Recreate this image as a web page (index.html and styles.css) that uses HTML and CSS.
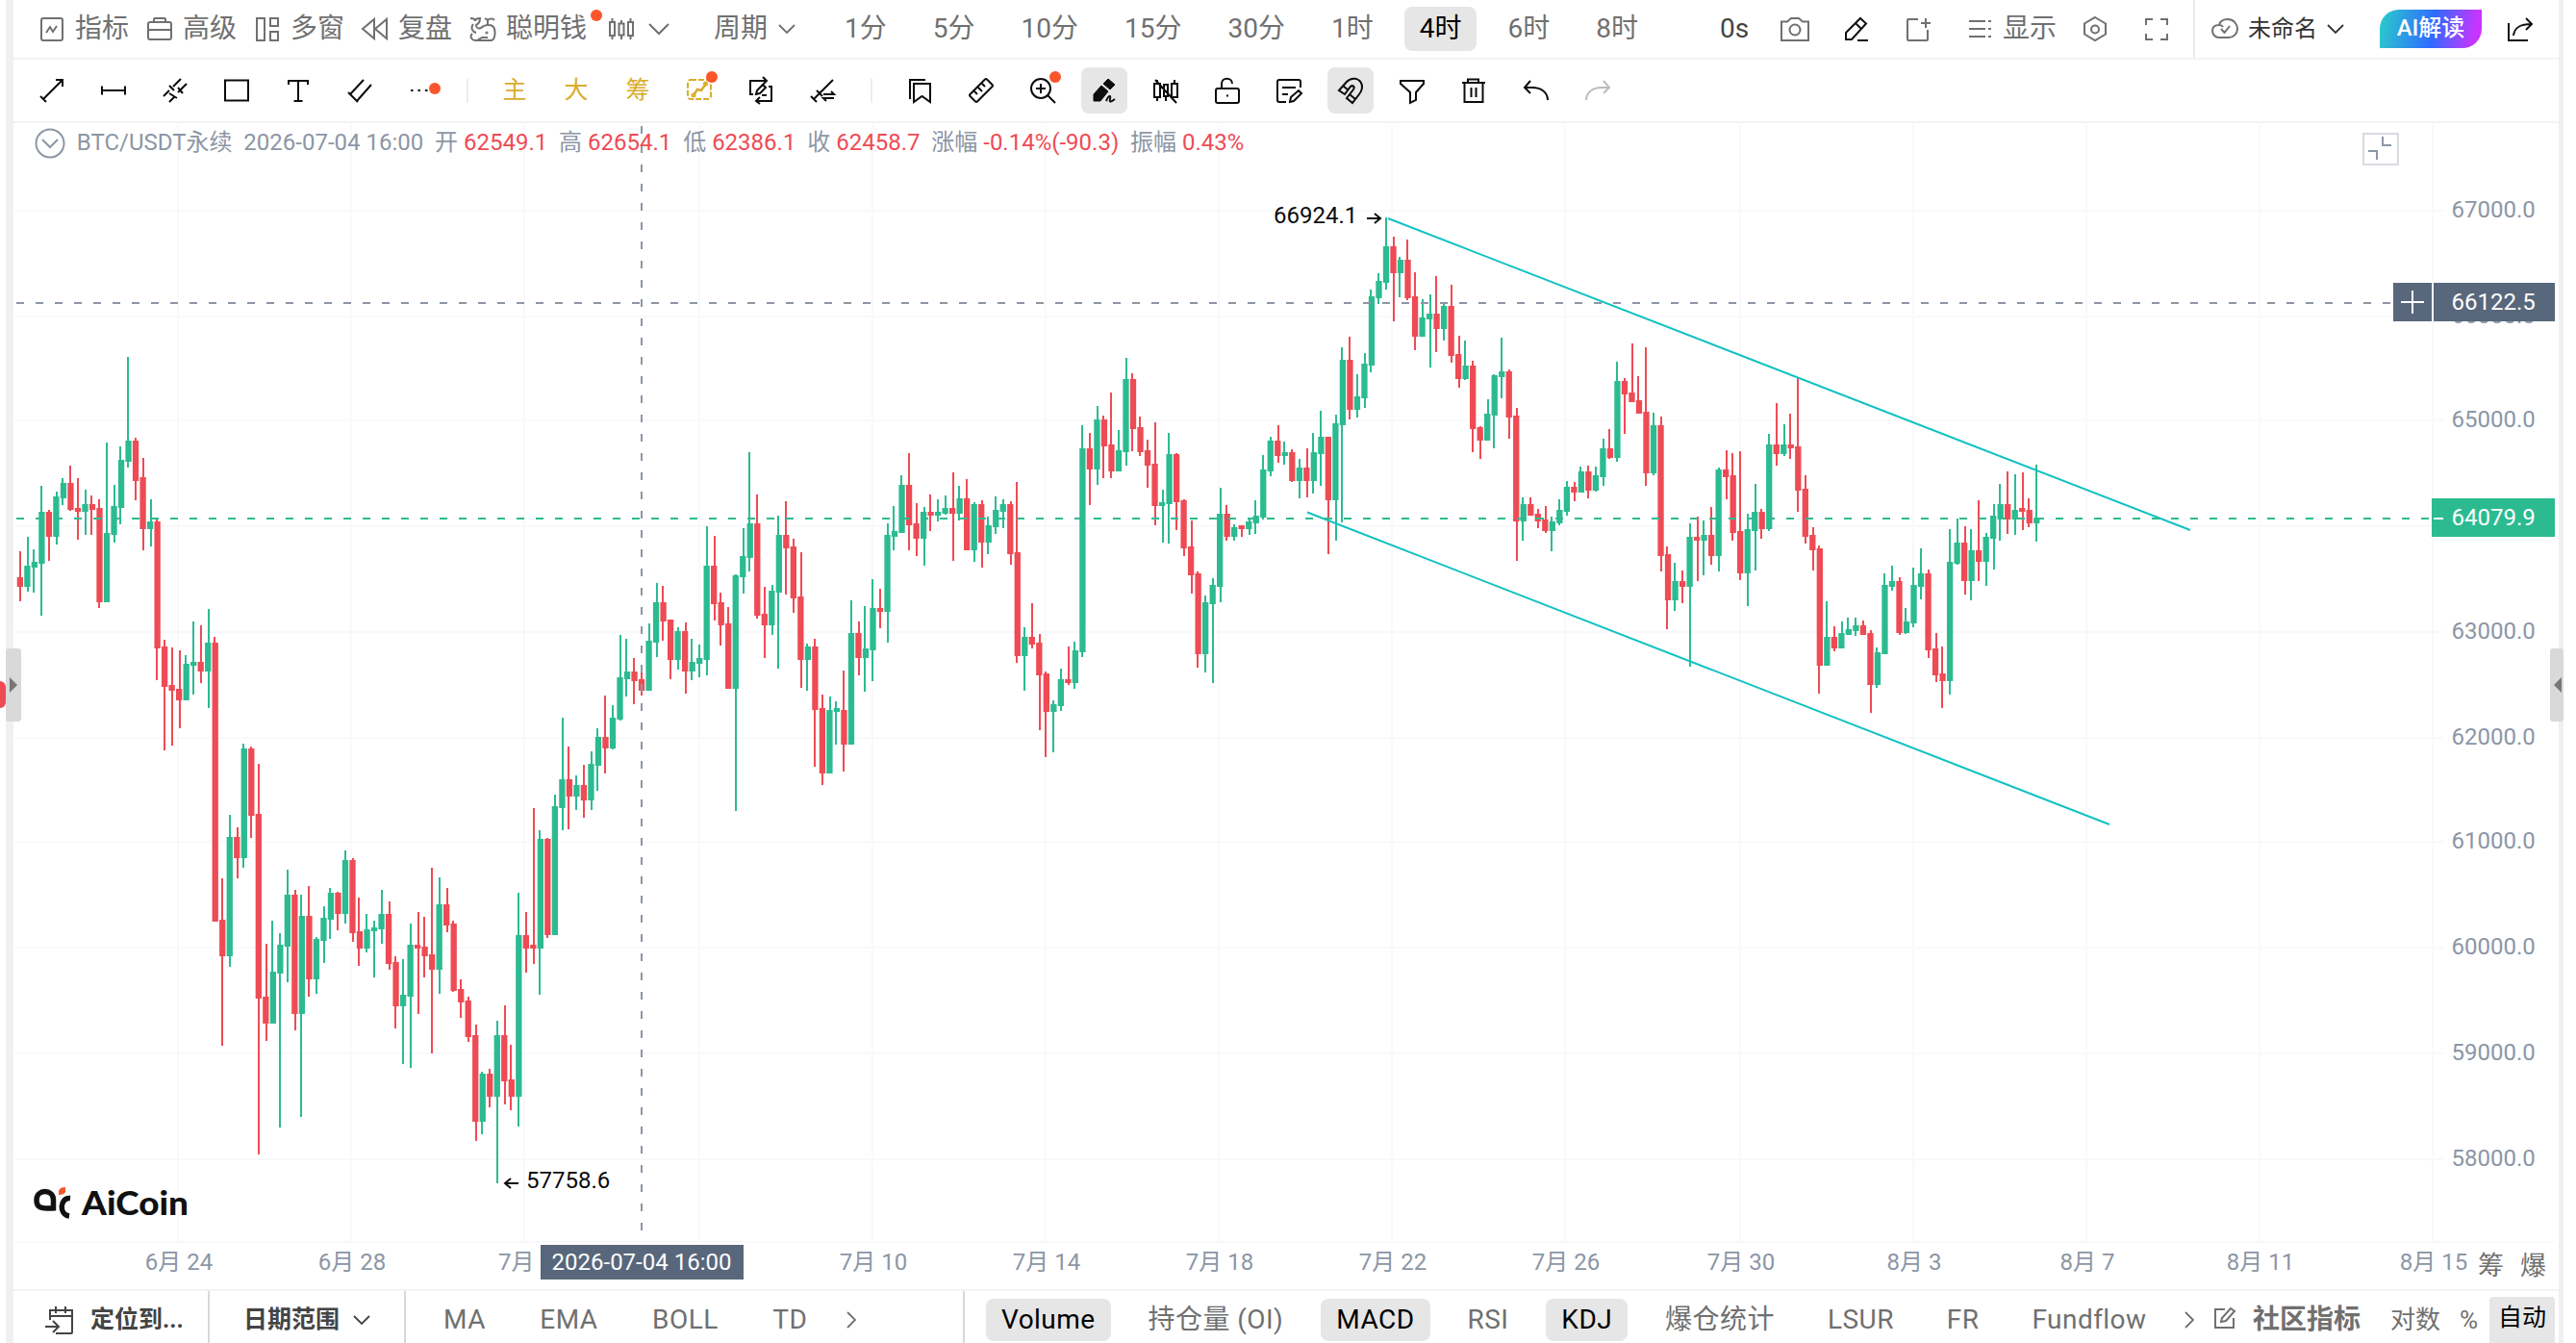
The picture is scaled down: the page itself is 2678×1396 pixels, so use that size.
FILE: index.html
```html
<!DOCTYPE html>
<html lang="zh-CN">
<head>
    <meta charset="UTF-8">
    <title>AiCoin - BTC/USDT永续</title>
    <link rel="stylesheet" href="styles.css">
</head>
<body>
<div class="app">
    <div class="gutter gutter-left">
        <span class="side-badge"></span>
        <span class="handle handle-left"></span>
    </div>

    <div class="main">
        <header class="topbar">
            <div class="menu">
                <a class="menu-item"><svg class="icon" viewBox="0 0 28 28"><rect x="3" y="3" width="22" height="23" rx="2"/><path d="M8 18l4-6 3 5 4-6"/></svg>指标</a>
                <a class="menu-item"><svg class="icon" viewBox="0 0 28 28"><rect x="2" y="7" width="24" height="18" rx="2"/><path d="M8 7V4q0-1 1-1h10q1 0 1 1v3M2 15h24"/></svg>高级</a>
                <a class="menu-item"><svg class="icon" viewBox="0 0 28 28"><rect x="3" y="3" width="8" height="23"/><path d="M17 3h8v8h-8zM17 17h8v9h-8z"/></svg>多窗</a>
                <a class="menu-item"><svg class="icon" viewBox="0 0 28 28"><path d="M13 4v20L1 14zM26 4v20L14 14z"/></svg>复盘</a>
                <a class="menu-item wide"><svg class="icon" viewBox="0 0 28 28"><path d="M1 3c3 0 5 1 5 3 0-2 2-3 5-3 0 4-2 6-4 7 0 3 2 4 5 3 3-3 8-4 12-2 4 3 3 14-1 15H7C2 26 0 22 3 19M4 9c-3 4-1 8 3 9M19 10V6c0-2-2-3-3-2M19 6c0-2 5-4 7-1M8 26l5-3h6"/><circle cx="18" cy="18" r=".6"/></svg>聪明钱<i class="dot dot-money"></i></a>
                <svg class="icon" viewBox="0 0 28 28"><path d="M2 7h5v14H2zM11.500 8.500h5v12h-5zM21 7h5v14h-5zM4.500 3v4M4.500 21v4M14 5v3M14 21v4M23.500 3v4M23.500 21v4"/></svg>
                <svg class="icon chevron-lg" viewBox="0 0 22 12"><path d="M1 1l10 10L21 1"/></svg>
            </div>
            <div class="periods">
                <a class="cycle">周期<svg class="chevron" viewBox="0 0 18 10"><path d="M1 1l8 8 8-8"/></svg></a>
                <a>1分</a>
                <a>5分</a>
                <a>10分</a>
                <a>15分</a>
                <a>30分</a>
                <a>1时</a>
                <a class="active">4时</a>
                <a>6时</a>
                <a>8时</a>
            </div>
            <div class="tools">
                <span class="delay">0s</span>
                <svg class="icon" viewBox="0 0 28 28"><path d="M0 6.500h6L10 3h8l4 3.500h6V26H0z"/><ellipse cx="14" cy="15" rx="5.500" ry="5.500"/></svg>
                <svg class="icon dark" viewBox="0 0 28 28"><path d="M3 18L18 3l6 5.500L9 25H3zM13 8l6 6M15 26h11"/></svg>
                <svg class="icon" viewBox="0 0 28 28"><path d="M14 4H4q-1 0-1 1v20q0 1 1 1h19q1 0 1-1V15M22 3v10M17 8h10"/></svg>
                <a class="display"><svg class="icon" viewBox="0 0 28 28"><path d="M3 6h17M3 14h17M3 22h17M23 6h3M23 14h3M23 22h3"/></svg>显示</a>
                <svg class="icon" viewBox="0 0 28 28"><path d="M14 2l11 6.500v11L14 26 3 19.500v-11z"/><circle cx="14" cy="14.500" r="4"/></svg>
                <svg class="icon" viewBox="0 0 28 28"><path d="M3 10V4h7M18 4h7v6M25 19v6h-7M10 25H3v-6"/></svg>
            </div>
            <div class="account">
                <svg class="icon" viewBox="0 0 28 28"><path d="M8 10c1-4 5-6 9-6 6 0 10 5 10 10s-4 9-9 9H8c-4 0-7-3-7-7s3-6 7-6zM10 14l3.500 4L19 11M8 10q3 0 4 2"/></svg>
                <a class="layout-name">未命名<svg class="chevron" viewBox="0 0 18 10"><path d="M1 1l8 8 8-8"/></svg></a>
                <button class="ai">AI解读</button>
                <svg class="icon dark" viewBox="0 0 28 28"><path d="M2 8v18h20M7 21c1-8 6-12 19-12M20 3l6 6-6 6"/></svg>
            </div>
        </header>

        <nav class="drawbar">
            <b><svg class="icon" viewBox="0 0 28 28"><path d="M5 23L25 3M18 3h7v7M2 20l6 6"/></svg></b>
            <b><svg class="icon" viewBox="0 0 28 28"><path d="M2 14h24M2 9.500v9M26 9.500v9"/></svg></b>
            <b><svg class="icon" viewBox="0 0 28 28"><path d="M2 20l6-6M12 10l8-8M8 26l5-5M17 16l9-9M8 9l5 5M17 11l5 6M8 17l8 5"/></svg></b>
            <b><svg class="icon" viewBox="0 0 28 28"><rect x="2" y="3.500" width="24" height="21"/></svg></b>
            <b><svg class="icon" viewBox="0 0 28 28"><path d="M4 8V4h20v4M14 4v21M9.500 25h9"/></svg></b>
            <b><svg class="icon" viewBox="0 0 28 28"><path d="M4 18L18 3M11 25L26 8M2 16l10 10"/></svg></b>
            <b><svg class="icon" viewBox="0 0 28 28"><path d="M3 14h2.500M10.500 14H13M18 14h2.500"/></svg><i class="dot dot-more"></i></b>
            <hr>
            <b class="gold">主</b>
            <b class="gold">大</b>
            <b class="gold">筹</b>
            <b class="gold"><svg class="icon" viewBox="0 0 28 28"><rect x="2" y="4" width="24" height="20" rx="3" stroke-dasharray="6 2"/><path d="M8 20l4-6 4 1 5-7" stroke-width="2.500"/><circle cx="8" cy="20" r="1.500"/><circle cx="20.500" cy="8" r="1.500"/></svg><i class="dot"></i></b>
            <b><svg class="icon" viewBox="0 0 28 28"><path d="M6 18H3V4h17M16 0l4 4-4 4M22 10h3v15H9M13 21l-4 4 4 3M9 18l1-4 6-6 3 3-6 6zM15 19h5"/></svg></b>
            <b><svg class="icon" viewBox="0 0 28 28"><path d="M5 23L25 3M2 20l6 6M8 14l6 6M15 18h11l-3-3M26 22H15l3 3"/></svg></b>
            <hr class="second">
            <b><svg class="icon" viewBox="0 0 28 28"><path d="M4 23V3h16M8 7h17v19l-8.500-6L8 26z"/></svg></b>
            <b><svg class="icon" viewBox="0 0 28 28"><path d="M2.500 18L18 2.500q1-1 2 0L25.500 8q1 1 0 2L10 25.500q-1 1-2 0L2.500 20q-1-1 0-2zM7 15l3 3M11 11l4 4M15 7l3 3"/></svg></b>
            <b><svg class="icon" viewBox="0 0 28 28"><circle cx="12" cy="12" r="10"/><path d="M19 19l8 8M7 12h10M12 7v10"/></svg><i class="dot"></i></b>
            <b class="on"><svg class="icon" viewBox="0 0 28 28"><path class="solid" d="M3 25v-7l8-9 7 6-8 10zM13 7l5-5 7 6-5 5z"/><path d="M16 25c3-7 5-6 4-2s1 3 5 0"/></svg></b>
            <b><svg class="icon" viewBox="0 0 28 28"><path d="M2 7h6v14H2zM5 3v4M5 21v4M12 8v12h4V8zM14 21v4M20 7h6v14h-6zM23 3v4M3 3l22 24"/></svg></b>
            <b><svg class="icon" viewBox="0 0 28 28"><rect x="2" y="12" width="24" height="15" rx="2"/><path d="M8 12V7c0-7 11-7 11 0M14 18.500v2"/></svg></b>
            <b><svg class="icon" viewBox="0 0 28 28"><path d="M26 11V5q0-2-2-2H4Q2 3 2 5v19q0 2 2 2h7M7 11h14M7 18h6M15 26l1-5 8-7 3 3-8 8z"/></svg></b>
            <b class="on"><svg class="icon" viewBox="0 0 28 28"><path d="M2 14L10 5c5-5 12-4 15 1 2 4 1 8-2 12l-7 9-6-5 7-9c2-3-1-5-3-3l-6 8zM6 9l6 5M13 18l6 5"/></svg></b>
            <b><svg class="icon" viewBox="0 0 28 28"><path d="M2 4h24v3l-8 9v8l-6 3V16L2 7z"/></svg></b>
            <b><svg class="icon" viewBox="0 0 28 28"><path d="M2 6h24M8 6V2.500h11V6M4.500 6v20h19V6M11.500 11v10M16.500 11v10"/></svg></b>
            <b><svg class="icon" viewBox="0 0 28 28"><path d="M9 4l-6 7 6 6M3 11h8c9 0 16 5 16 13"/></svg></b>
            <b class="off"><svg class="icon" viewBox="0 0 28 28"><path d="M21 4l6 7-6 6M27 11h-8C10 11 3 16 3 24"/></svg></b>
        </nav>

        <section class="chart">
            <svg id="plot" viewBox="14 128 2646 1212"></svg>
            <div class="quote">
                <svg class="icon collapse" viewBox="0 0 32 32"><circle cx="16" cy="16" r="14.500"/><path d="M8 12l8 8 8-8"/></svg>
                <span class="symbol">BTC/USDT永续</span>
                <span class="time">2026-07-04 16:00</span>
                <span>开<em>62549.1</em></span>
                <span>高<em>62654.1</em></span>
                <span>低<em>62386.1</em></span>
                <span>收<em>62458.7</em></span>
                <span>涨幅<em>-0.14%(-90.3)</em></span>
                <span>振幅<em>0.43%</em></span>
            </div>
        </section>

        <footer class="bottombar">
            <a class="locate"><svg class="icon" viewBox="0 0 32 32"><path d="M6 16V6h23v23q0 1-1 1H12M6 12h23M12 2v7M22 2v7M1 23h13M9 17l6 6-6 6"/></svg>定位到...</a>
            <a class="range">日期范围<svg class="chevron" viewBox="0 0 18 10"><path d="M1 1l8 8 8-8"/></svg></a>
            <div class="indicators main-set">
                <a>MA</a>
                <a>EMA</a>
                <a>BOLL</a>
                <a>TD</a>
                <svg class="next" viewBox="0 0 10 18"><path d="M1 1l8 8-8 8"/></svg>
            </div>
            <div class="indicators sub-set">
                <a class="active">Volume</a>
                <a>持仓量 (OI)</a>
                <a class="active">MACD</a>
                <a>RSI</a>
                <a class="active">KDJ</a>
                <a>爆仓统计</a>
                <a>LSUR</a>
                <a>FR</a>
                <a>Fundflow</a>
                <svg class="next" viewBox="0 0 10 18"><path d="M1 1l8 8-8 8"/></svg>
            </div>
            <div class="scale">
                <svg class="icon edit" viewBox="0 0 24 24"><path d="M12 3H2v19h19V12M8 16l1-4L18 2l4 3-9 10z"/></svg>
                <strong>社区指标</strong>
                <span>对数</span>
                <span>%</span>
                <span class="active">自动</span>
            </div>
        </footer>
    </div>

    <div class="gutter gutter-right">
        <span class="handle handle-right"></span>
    </div>
</div>

<script src="chart.js"></script>
</body>
</html>
```

FILE: styles.css
```css
* {
    box-sizing: border-box;
}

body {
    margin: 0;
    background-color: #fff;
    font-family: Roboto, "Noto Sans CJK SC", sans-serif;
    font-size: 28px;
    color: #707070;
    overflow: hidden;
}

.app {
    display: flex;
    width: 2678px;
    height: 1396px;
}

.main {
    display: flex;
    flex-direction: column;
    width: 2646px;
}

.gutter {
    position: relative;
    background-color: #f0f0f0;
}

.gutter-left {
    width: 14px;
    border-left: 6px solid #fff;
}

.gutter-right {
    width: 5px;
}

.side-badge {
    position: absolute;
    left: -6px;
    top: 708px;
    width: 6px;
    height: 28px;
    background-color: #ee4b55;
    border-radius: 0 6px 6px 0;
}

.handle {
    position: absolute;
    top: 674px;
    z-index: 2;
    width: 16px;
    height: 76px;
    background-color: #d9d9d9;
    border-radius: 3px;
}

.handle::after {
    content: "";
    position: absolute;
    top: 30px;
    border: 8px solid transparent;
}

.handle-left {
    left: 0;
}

.handle-left::after {
    left: 4px;
    border-left-color: #777;
    border-right-width: 0;
}

.handle-right {
    right: 0;
    width: 14px;
}

.handle-right::after {
    right: 2px;
    border-right-color: #777;
    border-left-width: 0;
}

.icon {
    flex: none;
    width: 28px;
    height: 28px;
    fill: none;
    stroke: currentColor;
    stroke-width: 2;
    overflow: visible;
}

.chevron {
    width: 18px;
    height: 10px;
    fill: none;
    stroke: currentColor;
    stroke-width: 1.8;
}

.dark {
    color: #111;
}

.dot {
    position: absolute;
    width: 12px;
    height: 12px;
    border-radius: 50%;
    background-color: #f9562d;
}

/* top bar */
.topbar {
    display: flex;
    align-items: center;
    height: 62px;
    padding-right: 26px;
    border-bottom: 2px solid #f3f3f3;
    line-height: 40px;
}

.menu {
    display: flex;
    align-items: center;
    padding-left: 26px;
}

.menu-item {
    position: relative;
    display: flex;
    align-items: center;
    gap: 10px;
    width: 112px;
}

.menu-item.wide {
    width: 144px;
}

.dot-money {
    right: 6px;
    top: 0;
}

.chevron-lg {
    width: 22px;
    height: 12px;
    margin-left: 14px;
}

.periods {
    display: flex;
    gap: 16px;
    margin-left: 30px;
}

.periods a {
    padding: 3px 16px;
    border-radius: 8px;
}

.periods .cycle {
    display: flex;
    align-items: center;
    gap: 11px;
    padding-right: 19px;
}

.periods .active {
    background-color: #e6e6e6;
    color: #000;
}

.tools {
    display: flex;
    align-items: center;
    gap: 36px;
    margin-left: auto;
    padding-right: 24px;
}

.delay {
    width: 28px;
    white-space: nowrap;
    color: #444;
}

.display {
    display: flex;
    align-items: center;
    gap: 10px;
    margin-right: -10px;
}

.account {
    display: flex;
    align-items: center;
    height: 60px;
    padding-left: 17px;
    border-left: 2px solid #ebebeb;
}

.layout-name {
    display: flex;
    align-items: center;
    gap: 10px;
    margin: 0 37px 0 10px;
    font-size: 24px;
    color: #333;
}

.ai {
    width: 106px;
    height: 40px;
    margin-right: 26px;
    padding: 0 0 3px;
    border: 0;
    border-radius: 20px 0;
    background: linear-gradient(100deg, #2bc8cc 3%, #2f6bff 52%, #c935ff 92%);
    color: #fff;
    font-family: inherit;
    font-size: 24px;
    line-height: 36px;
    font-weight: 500;
}

/* drawing tools */
.drawbar {
    display: flex;
    align-items: center;
    gap: 16px;
    height: 66px;
    padding-left: 16px;
    border-bottom: 2px solid #f3f3f3;
    color: #0c0c0c;
}

.drawbar b {
    position: relative;
    display: flex;
    align-items: center;
    justify-content: center;
    width: 48px;
    height: 48px;
    border-radius: 8px;
    font-size: 25px;
    line-height: 45px;
    font-weight: 400;
}

.drawbar hr {
    width: 2px;
    height: 26px;
    margin: 0 8px 0 7px;
    border: 0;
    background-color: #ebeef1;
}

.drawbar .second {
    margin: 0 9px 0 10px;
}

.drawbar .gold {
    padding-bottom: 2px;
    color: #d9ac2b;
}

.drawbar .on {
    background-color: #e6e6e6;
}

.drawbar .off {
    color: #bdbdbd;
}

.drawbar .dot {
    right: 5px;
    top: 4px;
}

.drawbar .dot-more {
    right: 4px;
    top: 16px;
}

.solid {
    fill: currentColor;
    stroke-width: 1;
}

/* chart */
.chart {
    position: relative;
    height: 1212px;
}

.chart > svg {
    display: block;
    width: 2646px;
    height: 1212px;
}

.quote {
    position: absolute;
    left: 22px;
    top: 5px;
    display: flex;
    align-items: center;
    gap: 11.8px;
    height: 30px;
    font-size: 24px;
    line-height: 30px;
    white-space: nowrap;
    color: #8c96a5;
}

.quote .collapse {
    width: 32px;
    height: 32px;
    margin-top: 2px;
}

.quote em {
    margin-left: 6px;
    font-style: normal;
    color: #ee4b55;
}

#plot text {
    font-size: 24px;
    fill: #8c96a5;
}

#plot .grid {
    stroke: #f9f9fb;
    stroke-width: 2;
}

#plot .up {
    fill: #2cbb91;
}

#plot .down {
    fill: #ee4b55;
}

#plot .trend {
    stroke: #13c2c2;
    stroke-width: 2;
}

#plot .dash {
    stroke: #8c96a5;
    stroke-width: 2;
    stroke-dasharray: 8 12;
}

#plot .last {
    stroke: #2cbb91;
}

#plot .tag {
    fill: #58677b;
}

#plot .stroke {
    fill: none;
    stroke: #8c96a5;
    stroke-width: 2;
}

#plot .arrow {
    stroke: #0c0c0c;
}

#plot .frame {
    stroke: #d7dbe1;
}

#plot .white {
    fill: #fff;
    stroke: none;
}

#plot .mark {
    fill: #0c0c0c;
}

#plot .side {
    font-size: 27px;
    fill: #707070;
}

#plot .logo {
    fill: none;
    stroke: #111;
    stroke-width: 5.5;
}

#plot .logo-dot {
    fill: #f9562d;
}

#plot .brand {
    font-family: Lato, sans-serif;
    font-size: 35px;
    font-weight: 900;
    fill: #111;
}

/* bottom bar */
.bottombar {
    display: flex;
    height: 56px;
    border-top: 2px solid #f3f3f3;
    line-height: 44px;
    white-space: nowrap;
}

.locate,
.range {
    display: flex;
    align-items: center;
    padding-top: 5px;
    font-size: 25px;
    font-weight: 700;
    color: #444;
    border-right: 2px solid #d8d8d8;
}

.locate {
    gap: 16px;
    width: 204px;
    padding-left: 32px;
}

.locate .icon {
    width: 32px;
    height: 32px;
}

.range {
    gap: 14px;
    width: 204px;
    padding-left: 35px;
}

.indicators {
    display: flex;
    align-items: center;
    gap: 23px;
    padding-top: 6px;
    letter-spacing: 0.45px;
}

.indicators a {
    height: 44px;
    padding: 0 16px;
    border-radius: 8px;
}

.indicators .active {
    background-color: #e6e6e6;
    color: #000;
}

.main-set {
    gap: 24.5px;
    width: 581px;
    padding-left: 23px;
    border-right: 2px solid #d8d8d8;
}

.sub-set {
    padding-left: 22px;
}

.next {
    flex: none;
    width: 10px;
    height: 18px;
    fill: none;
    stroke: currentColor;
    stroke-width: 1.8;
}

.scale {
    display: flex;
    align-items: center;
    margin-left: auto;
    padding-top: 6px;
    padding-right: 4px;
    font-size: 26px;
}

.scale .edit {
    width: 24px;
    height: 24px;
    margin-right: 17px;
    margin-bottom: 4px;
}

.scale strong {
    margin-right: 31px;
    font-size: 28px;
}

.scale span {
    margin-right: 20px;
}

.scale .active {
    width: 68px;
    height: 48px;
    margin-left: -8px;
    margin-right: 0;
    border-radius: 4px 4px 0 0;
    text-align: center;
    font-size: 25px;
    background-color: #e6e6e6;
    color: #000;
}
```

FILE: chart.js
```javascript
// one row per 4h candle: direction (1 up, 0 down), high, body top, body bottom, low
const candles = [
    [0,573,600,610,625],[1,558,588,610,615],[1,571,584,590,616],[1,505,532,586,640],[0,530,532,558,583],
    [1,511,516,558,566],[1,497,502,518,525],[0,484,502,530,531],[0,497,528,532,561],[1,509,524,532,556],
    [0,515,524,530,556],[0,519,528,626,632],[1,460,554,626,626],[1,504,526,556,564],[1,464,478,528,545],
    [1,371,458,480,486],[0,455,458,500,520],[0,476,496,550,572],[1,519,542,550,568],[0,539,542,674,707],
    [0,665,672,714,780],[0,673,712,718,775],[0,676,716,728,757],[1,681,690,728,728],[1,646,688,692,722],
    [0,650,688,698,710],[1,633,668,698,736],[0,662,668,958,958],[0,913,956,994,1087],[1,847,870,994,1005],
    [0,860,870,892,913],[1,773,778,892,902],[0,776,778,848,871],[0,794,846,1038,1200],[0,981,1036,1064,1082],
    [1,957,1010,1064,1064],[1,970,982,1012,1172],[1,904,930,984,1021],[0,925,930,1054,1071],[1,930,952,1054,1161],
    [0,921,952,1018,1036],[1,974,976,1018,1033],[1,942,954,978,1001],[1,923,928,956,976],[0,927,928,950,967],
    [1,884,894,950,960],[0,892,894,970,979],[0,933,968,986,1004],[1,950,966,986,990],[1,957,964,968,1016],
    [1,925,950,966,981],[0,937,950,1002,1008],[0,994,1000,1046,1069],[1,997,1034,1046,1106],[1,960,982,1036,1110],
    [0,948,982,986,1054],[0,953,984,994,1016],[0,902,992,1008,1095],[1,912,940,1008,1033],[0,923,940,962,969],
    [0,957,960,1030,1031],[0,1018,1028,1042,1058],[0,1036,1040,1078,1083],[0,1065,1076,1166,1186],[1,1114,1116,1166,1179],
    [0,1111,1116,1140,1151],[1,1061,1076,1140,1230],[0,1045,1076,1124,1148],[0,1086,1122,1140,1154],[1,928,972,1140,1171],
    [0,948,972,986,1011],[0,840,982,986,1002],[1,863,872,986,1034],[0,871,872,972,975],[1,826,838,972,972],
    [1,746,810,840,863],[0,776,810,828,862],[1,806,816,828,842],[0,795,816,832,850],[1,781,794,832,842],
    [1,757,766,796,822],[0,723,766,778,804],[1,733,746,778,779],[1,660,704,748,749],[1,664,698,706,724],
    [0,684,698,708,732],[0,699,706,718,723],[1,648,666,718,718],[1,606,626,668,683],[0,609,626,646,666],
    [0,644,644,686,706],[1,652,656,686,696],[0,647,656,698,721],[1,664,688,698,707],[1,670,684,690,704],
    [1,547,588,686,702],[0,557,588,628,645],[0,616,626,650,671],[0,631,648,716,716],[1,597,598,716,843],
    [1,549,578,600,617],[1,470,544,580,594],[0,514,544,640,643],[0,610,638,650,684],[1,608,614,650,660],
    [1,536,556,616,695],[0,521,556,570,618],[0,560,568,622,637],[0,574,620,686,715],[1,669,672,686,718],
    [0,664,672,738,797],[0,722,736,804,816],[1,724,738,804,804],[1,729,736,740,774],[0,697,738,774,802],
    [1,624,658,774,774],[0,646,658,684,702],[1,630,674,684,719],[1,602,632,676,708],[0,612,632,636,653],
    [1,544,556,636,668],[1,526,552,558,572],[1,494,504,554,554],[0,471,504,546,572],[0,523,544,560,578],
    [1,527,532,560,588],[0,514,532,536,552],[1,519,532,536,542],[1,515,528,534,535],[0,491,528,534,583],
    [1,505,518,534,541],[0,498,518,572,572],[1,522,524,572,584],[0,520,524,564,590],[1,537,546,564,576],
    [1,516,530,548,555],[1,519,524,532,549],[0,521,524,576,587],[0,501,574,682,689],[1,652,662,682,718],
    [0,627,662,670,674],[0,659,668,702,759],[0,698,700,740,787],[1,728,732,740,782],[1,695,706,734,739],
    [0,672,706,710,712],[1,667,676,710,716],[1,442,466,678,683],[0,450,466,488,525],[1,422,436,488,504],
    [0,432,436,464,497],[0,408,462,490,497],[1,447,468,490,490],[1,372,394,470,484],[0,388,394,446,469],
    [0,433,444,470,474],[0,457,468,484,507],[0,439,482,526,546],[1,509,522,526,564],[1,450,472,524,565],
    [0,471,472,522,551],[0,519,520,570,578],[0,541,568,598,617],[0,594,596,680,694],[1,619,626,680,699],
    [1,601,608,628,710],[1,507,534,610,626],[0,525,534,558,562],[1,545,548,558,562],[0,546,546,550,558],
    [1,539,542,550,556],[1,520,536,544,555],[1,473,488,538,540],[1,454,458,490,495],[0,442,458,474,481],
    [1,459,470,474,483],[0,467,470,500,501],[1,477,486,500,518],[0,466,486,500,517],[1,450,470,500,513],
    [1,427,454,472,505],[0,454,454,520,576],[1,431,440,520,562],[1,361,374,442,543],[0,350,374,426,436],
    [1,389,412,426,434],[1,367,378,414,424],[1,301,308,380,387],[1,284,292,310,316],[1,226,256,294,301],
    [0,246,256,284,334],[1,267,270,284,309],[0,249,270,310,312],[0,283,308,350,364],[1,311,330,350,350],
    [1,306,326,332,382],[0,287,326,342,366],[1,315,318,342,354],[0,296,318,370,377],[0,349,368,394,403],
    [1,354,380,394,395],[0,375,380,446,470],[0,443,444,458,477],[1,415,430,458,458],[1,389,390,432,466],
    [1,351,386,392,414],[0,384,386,434,456],[0,424,432,542,583],[1,517,524,542,562],[0,517,524,536,536],
    [0,529,534,542,549],[0,526,540,552,554],[1,537,542,552,573],[1,519,530,544,546],[1,500,506,532,536],
    [0,501,506,512,521],[1,485,490,512,512],[0,484,490,510,518],[1,485,494,510,511],[1,456,466,496,505],
    [0,446,466,476,477],[1,376,396,476,480],[0,393,396,410,451],[0,357,408,418,418],[0,391,416,430,430],
    [0,361,428,492,505],[1,429,442,492,494],[0,433,442,578,594],[0,568,576,624,654],[1,585,604,624,635],
    [0,593,604,610,627],[1,544,558,610,693],[0,537,558,562,604],[1,541,556,562,598],[0,527,556,578,587],
    [1,486,488,578,594],[0,468,488,496,519],[0,471,494,554,562],[0,469,552,596,603],[1,534,550,596,630],
    [1,503,532,552,593],[0,529,532,550,560],[1,451,462,550,552],[0,419,462,472,484],[1,441,462,472,474],
    [0,430,462,466,477],[0,393,464,510,532],[0,494,508,558,565],[0,548,556,572,593],[0,567,570,692,721],
    [1,625,662,692,692],[0,651,662,674,677],[1,646,658,674,674],[1,642,654,660,660],[1,642,650,656,661],
    [0,645,650,660,660],[0,655,658,712,741],[1,673,678,712,715],[1,596,608,680,680],[1,588,604,610,614],
    [0,600,604,658,660],[1,632,646,658,659],[1,590,608,648,652],[1,570,596,610,623],[0,592,596,676,684],
    [0,658,674,702,709],[0,672,700,708,736],[1,550,584,708,722],[1,539,564,586,587],[0,547,564,604,618],
    [1,550,572,604,624],[0,520,572,584,604],[1,554,558,584,609],[1,524,536,560,592],[1,503,524,540,562],
    [0,490,524,540,555],[1,493,530,540,556],[0,491,528,532,551],[0,518,530,544,548],[1,483,538,544,563]
];

// an empty label leaves only the grid line, its place is taken by a tag
const days = [
    [185, '6月 24'], [365, '6月 28'], [545, '7月'], [727, ''], [907, '7月 10'],
    [1087, '7月 14'], [1267, '7月 18'], [1447, '7月 22'], [1627, '7月 26'], [1809, '7月 30'],
    [1989, '8月 3'], [2169, '8月 7'], [2349, '8月 11'], [2529, '8月 15']
];

const prices = [
    [219, '67000.0'], [329, '66000.0'], [437, '65000.0'], [547, ''], [657, '63000.0'],
    [767, '62000.0'], [875, '61000.0'], [985, '60000.0'], [1095, '59000.0'], [1205, '58000.0']
];

const STEP = 7.514;
const FIRST = 19.8;

function line(cls, x1, y1, x2, y2) {
    return `<line class="${cls}" x1="${x1}" y1="${y1}" x2="${x2}" y2="${y2}"/>`;
}

function rect(cls, x, y, w, h) {
    return `<rect class="${cls}" x="${x}" y="${y}" width="${w}" height="${h}"/>`;
}

function text(cls, x, y, value, anchor = 'start') {
    return `<text class="${cls}" x="${x}" y="${y}" text-anchor="${anchor}">${value}</text>`;
}

function drawGrid() {
    let out = line('grid', 16, 1291, 2656, 1291);
    days.forEach(([x, label]) => {
        out += line('grid', x, 130, x, 1290);
        if (label === '7月') {
            out += text('', 518, 1320, label);
        } else if (label) {
            out += text('', x + 1, 1320, label, 'middle');
        }
    });
    prices.forEach(([y, label]) => {
        out += line('grid', 16, y, 2540, y);
        if (label) {
            out += text('', 2548.5, y + 7, label);
        }
    });
    return out;
}

function drawCandles() {
    return candles.map(([up, high, top, bottom, low], i) => {
        const cls = up ? 'up' : 'down';
        const x = FIRST + i * STEP;
        const wick = Math.round(x / 2) * 2;
        return rect(cls, wick, high, 2, low - high) + rect(cls, (x - 2.1).toFixed(2), top, 6.3, bottom - top);
    }).join('');
}

function drawTrend() {
    return line('trend', 1443, 227, 2277, 551) + line('trend', 1359, 532.5, 2193, 857);
}

function drawMarks() {
    return text('mark', 1324, 232, '66924.1')
        + '<path class="stroke arrow" d="M1421 227h14M1429 222l6 5-6 5"/>'
        + text('mark', 547, 1235, '57758.6')
        + '<path class="stroke arrow" d="M539 1230h-14M531 1225l-6 5 6 5"/>';
}

function drawCursor() {
    return line('dash last', 17, 539, 2528, 539)
        + line('dash', 17, 315, 2486, 315)
        + line('dash', 667, 131, 667, 1280)
        + rect('up', 2528, 518, 128, 40)
        + rect('white', 2530, 538, 10, 2)
        + text('white', 2548.5, 546, '64079.9')
        + rect('tag', 2488, 294, 40, 40)
        + rect('white', 2496, 313, 24, 2) + rect('white', 2507, 302, 2, 24)
        + rect('tag', 2530, 294, 126, 40)
        + text('white', 2548.5, 322, '66122.5')
        + rect('tag', 562, 1294, 211, 36)
        + text('white', 667, 1320, '2026-07-04 16:00', 'middle');
}

function drawExtras() {
    return '<rect class="stroke frame" x="2457" y="139" width="36" height="32"/>'
        + '<path class="stroke" d="M2477 142v9h9M2462 157h9v9"/>'
        + text('side', 2576, 1325, '筹') + text('side', 2620, 1325, '爆')
        + '<path class="logo" d="M55.500 1258.500v-11c0-12-17.500-12-17.500 0 0 9 6 8.500 17.500 8.500"/>'
        + '<path class="logo" d="M73 1245.500c-11-1-12 17-1 18.500"/>'
        + '<path class="logo-dot" d="M61 1238q1-4 7-4v5q-1 3-7 3z"/>'
        + '<text class="brand" x="85" y="1263" textLength="111" lengthAdjust="spacingAndGlyphs">AiCoin</text>';
}

document.getElementById('plot').innerHTML =
    drawGrid() + drawCandles() + drawTrend() + drawMarks() + drawCursor() + drawExtras();
```
